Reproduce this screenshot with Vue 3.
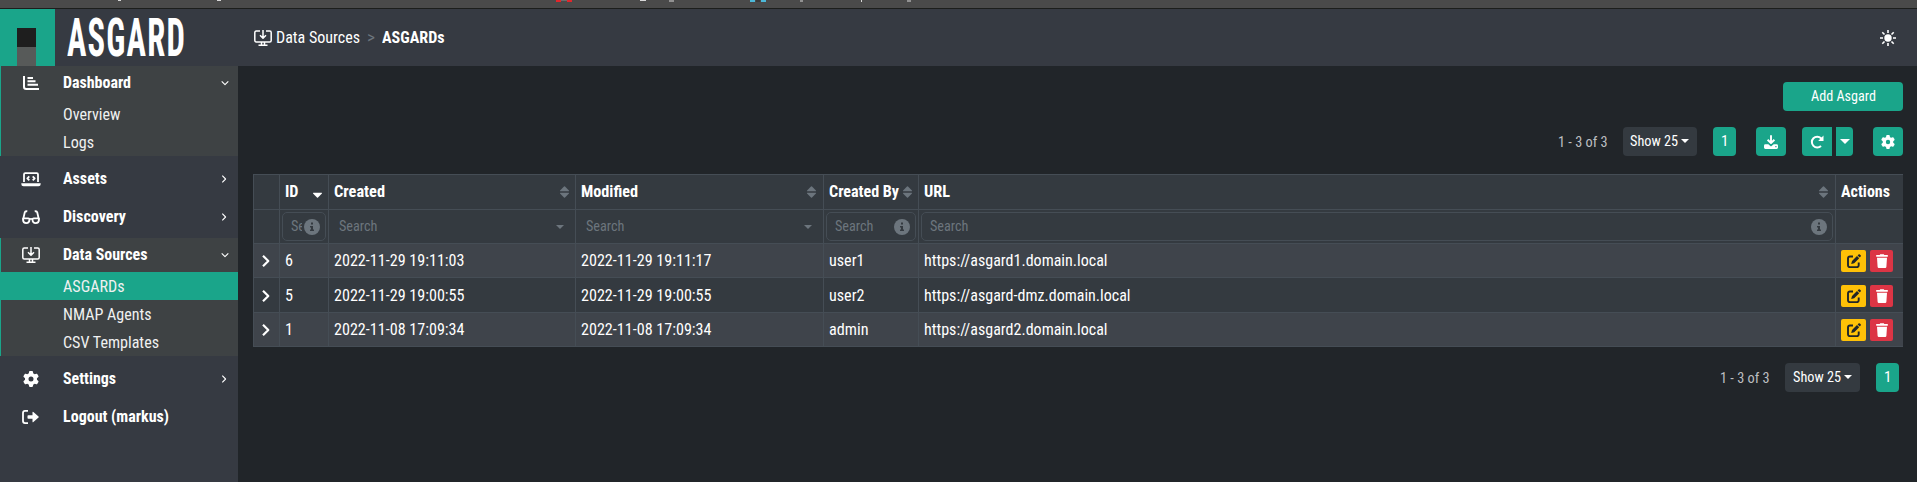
<script setup>
import { h } from 'vue'

// Condenses a label horizontally to the given advance width.
const fitText = (el, { value }) => {
  el.style.transform = 'none'
  el.style.width = 'auto'
  const natural = el.getBoundingClientRect().width
  el.style.width = value + 'px'
  el.style.transform = `scaleX(${value / natural})`
}
const vFit = { mounted: fitText, updated: fitText }

const gear = 'M495.9 166.6c3.2 8.7 .5 18.4-6.4 24.6l-43.3 39.4c1.1 8.3 1.7 16.8 1.7 25.4s-.6 17.1-1.7 25.4l43.3 39.4c6.9 6.2 9.6 15.9 6.4 24.6c-4.4 11.9-9.7 23.3-15.8 34.3l-4.7 8.1c-6.6 11-14 21.4-22.1 31.2c-5.9 7.2-15.7 9.6-24.5 6.8l-55.7-17.7c-13.4 10.3-28.2 18.9-44 25.4l-12.5 57.1c-2 9.1-9 16.3-18.2 17.8c-13.8 2.3-28 3.5-42.5 3.5s-28.7-1.2-42.5-3.5c-9.2-1.5-16.2-8.7-18.2-17.8l-12.5-57.1c-15.8-6.5-30.6-15.1-44-25.4L83.1 425.9c-8.8 2.8-18.6 .3-24.5-6.8c-8.1-9.8-15.5-20.2-22.1-31.2l-4.7-8.1c-6.1-11-11.4-22.4-15.8-34.3c-3.2-8.7-.5-18.4 6.4-24.6l43.3-39.4C64.6 273.1 64 264.6 64 256s.6-17.1 1.7-25.4L22.4 191.2c-6.9-6.2-9.6-15.9-6.4-24.6c4.4-11.9 9.7-23.3 15.8-34.3l4.7-8.1c6.6-11 14-21.4 22.1-31.2c5.9-7.2 15.7-9.6 24.5-6.8l55.7 17.7c13.4-10.3 28.2-18.9 44-25.4l12.5-57.1c2-9.1 9-16.3 18.2-17.8C227.3 1.2 241.5 0 256 0s28.7 1.2 42.5 3.5c9.2 1.5 16.2 8.7 18.2 17.8l12.5 57.1c15.8 6.5 30.6 15.1 44 25.4l55.7-17.7c8.8-2.8 18.6-.3 24.5 6.8c8.1 9.8 15.5 20.2 22.1 31.2l4.7 8.1c6.1 11 11.4 22.4 15.8 34.3zM256 336a80 80 0 1 0 0-160 80 80 0 1 0 0 160z'

// Each icon: viewBox size, filled paths and stroked paths.
const icons = {
  chart: { w: 16, h: 14, line: 'M1 0v10.800q0 2.200 2.200 2.200h12.800M4.500 2h5.500M4.500 5.200h8M4.500 8.800h10.500', sw: 2 },
  laptop: { w: 20, h: 15, line: 'M3 10V2.400Q3 1.200 4.200 1.200h11.600q1.200 0 1.200 1.200V10M8.300 4.400 6.300 6.400l2 2M11.700 4.400l2 2-2 2', fill: 'M.3 11.300h19.400v.7q0 2.200-2.200 2.200h-15Q.3 14.200.3 12z', sw: 1.8 },
  glasses: { w: 18, h: 14, line: 'M1 10 2.800 2.300Q3.300.8 5.300 1.400M17 10 15.200 2.300Q14.700.8 12.700 1.400M1 8.300h5.300q1.200 0 1.200 1.300 0 3.500-3.200 3.500T1 9.800zM17 8.300h-5.300q-1.200 0-1.200 1.300 0 3.500 3.200 3.500T17 9.800zM7.300 9.300q1.700-.9 3.400 0', sw: 1.8 },
  source: { w: 18, h: 16, line: 'M6 .9H2.300Q.8.900.8 2.400v8q0 1.500 1.500 1.500h13.400q1.500 0 1.500-1.500v-8Q17.200.9 15.700.9H12M9 0v7.500M6 5.300l3 3 3-3M4.500 15.200h9M7.500 12v3M10.500 12v3', sw: 1.5 },
  gear: { w: 512, h: 512, fill: gear },
  logout: { w: 17, h: 14, line: 'M6 .9H3Q1 .9 1 2.900v8.200q0 2 2 2h3', fill: 'M6.300 5.200h4.200V2.300q0-1 .9-.4l5.100 4.600q.6.500 0 1l-5.100 4.600q-.9.600-.9-.4V8.800H6.300q-.8 0-.8-.8V6q0-.8.800-.8z', sw: 1.8 },
  down: { w: 10, h: 10, line: 'M1.700 3.400 5 6.600l3.300-3.200', sw: 1.1 },
  right: { w: 10, h: 10, line: 'M3.300 1.700 6.600 5 3.300 8.300', sw: 1.1 },
  expand: { w: 8, h: 12, line: 'M1 .8 6.300 6 1 11.200', sw: 2.200 },
  download: { w: 14, h: 14, line: 'M7 .3v7M3.600 4.700 7 8l3.400-3.300', fill: 'M1.400 9.300h2.900L7 11.500l2.700-2.200h2.900q1.400 0 1.400 1.400v1.900q0 1.400-1.400 1.400H1.400Q0 14 0 12.600v-1.900Q0 9.300 1.400 9.300zM11.300 11.100v1.200h1.200v-1.200z', sw: 1.9 },
  refresh: { w: 14, h: 14, line: 'M11 11A5.400 5.400 0 1 1 11 3.200L12.300 4.800', fill: 'M13.500.6V6H8.200z', sw: 2 },
  edit: { w: 14, h: 14, line: 'M6 2.500H3Q1 2.500 1 4.500v6.700q0 2 2 2h6.700q2 0 2-2V8.500', fill: 'M4.200 9.900 5 7 10 2l2.200 2.200-5 5zM10.600 1.400 11.500.5q.7-.7 1.400 0l.7.7q.7.7 0 1.400l-.8.9z', sw: 1.9 },
  trash: { w: 12, h: 14, fill: 'M.2 1h3.500L4.200.2h3.600L8.300 1h3.500v1.700H.2zM1 3.700h10l-.6 9q-.1 1.300-1.200 1.300H2.800q-1.100 0-1.200-1.300z' },
  sun: { w: 16, h: 16, fill: 'M8 4.300a3.700 3.700 0 1 0 0 7.400 3.700 3.700 0 1 0 0-7.400z', line: 'M8 0v3M8 13v3M0 8h3M13 8h3M2.300 2.300 4.500 4.500M11.500 11.500l2.200 2.200M2.300 13.700l2.200-2.200M11.500 4.500l2.200-2.200', sw: 1.6 }
}
const Icon = (p) => {
  const i = icons[p.name]
  return h('svg', { viewBox: `0 0 ${i.w} ${i.h}`, width: p.w || i.w, height: p.h || i.h }, [
    i.fill && h('path', { d: i.fill, fill: 'currentColor', 'fill-rule': 'evenodd' }),
    i.line && h('path', { d: i.line, fill: 'none', stroke: 'currentColor', 'stroke-width': i.sw, 'stroke-linejoin': 'round' })
  ])
}
Icon.props = ['name', 'w', 'h']

const menu = [
  { label: 'Dashboard', fw: 68, icon: 'chart', open: true, items: [['Overview', 57.500], ['Logs', 31]] },
  { label: 'Assets', fw: 44, icon: 'laptop', arrow: true },
  { label: 'Discovery', fw: 63, icon: 'glasses', arrow: true },
  { label: 'Data Sources', fw: 84.500, icon: 'source', open: true, items: [['ASGARDs', 61.500, true], ['NMAP Agents', 88.500], ['CSV Templates', 96]] },
  { label: 'Settings', fw: 53, icon: 'gear', arrow: true },
  { label: 'Logout (markus)', fw: 106, icon: 'logout' }
]
const columns = [
  { label: 'ID', fw: 13.5, sort: 'desc', search: 'input' },
  { label: 'Created', fw: 51, sort: 'both', search: 'select' },
  { label: 'Modified', fw: 57, sort: 'both', search: 'select' },
  { label: 'Created By', fw: 70, sort: 'both', search: 'input' },
  { label: 'URL', fw: 26, sort: 'both', search: 'input' },
  { label: 'Actions', fw: 49 }
]
const rows = [
  [['6', 8], ['2022-11-29 19:11:03', 130.500], ['2022-11-29 19:11:17', 130.500], ['user1', 35.500], ['https://asgard1.domain.local', 183.500]],
  [['5', 8], ['2022-11-29 19:00:55', 130.500], ['2022-11-29 19:00:55', 130.500], ['user2', 35.500], ['https://asgard-dmz.domain.local', 206.500]],
  [['1', 8], ['2022-11-08 17:09:34', 130.500], ['2022-11-08 17:09:34', 130.500], ['admin', 39.500], ['https://asgard2.domain.local', 183.500]]
]
</script>

<template>
  <div class="page">
    <div class="strip">
      <svg width="960" height="8" viewBox="0 0 960 8">
        <path d="M556 0h5v2h-5zM567 0h5v2h-5z" fill="#e2262b" />
        <path d="M561 0h6v1h-6z" fill="#6a6a6a" />
        <path d="M750 0h5v2h-5zM761 0h5v2h-5z" fill="#4db8d8" />
        <path d="M756 0h4v2h-4z" fill="#3a3a3a" />
        <path d="M118 .5h3M217 .5h4M640 .5h6M669 1h5M800 1h3M861.500 0v2M907 1h4" stroke="#d8d8d8" fill="none" />
      </svg>
    </div>
    <header class="top">
      <div class="brand">
        <div class="mark"><i class="dark"></i><i class="grey"></i></div>
        <span class="name t" v-fit="119">ASGARD</span>
      </div>
      <nav class="crumbs">
        <Icon name="source" />
        <span class="t c1" v-fit="84">Data Sources</span>
        <span class="t sep" v-fit="8">&gt;</span>
        <span class="t b" v-fit="62.500">ASGARDs</span>
      </nav>
      <Icon name="sun" class="sun" />
    </header>

    <div class="body">
      <aside class="side">
        <div v-for="m in menu" :key="m.label" class="group" :class="{ open: m.open }">
          <div class="head">
            <span class="ico"><Icon :name="m.icon" :w="m.icon === 'gear' ? 16 : null" :h="m.icon === 'gear' ? 16 : null" /></span>
            <span class="t b" v-fit="m.fw">{{ m.label }}</span>
            <Icon v-if="m.open" name="down" class="arr" />
            <Icon v-else-if="m.arrow" name="right" class="arr" />
          </div>
          <div v-for="s in m.items" :key="s[0]" class="sub" :class="{ on: s[2] }">
            <span class="t" v-fit="s[1]">{{ s[0] }}</span>
          </div>
        </div>
      </aside>

      <main class="main">
        <div class="actions"><button class="btn add"><span class="t" v-fit="65">Add Asgard</span></button></div>
        <div class="tools">
          <span class="t count" v-fit="49.500">1 - 3 of 3</span>
          <button class="btn show"><span class="t" v-fit="48">Show 25</span><i class="caret"></i></button>
          <button class="btn page-no"><span class="t" v-fit="7.500">1</span></button>
          <button class="btn sq dl"><Icon name="download" /></button>
          <button class="btn sq rl"><Icon name="refresh" /></button>
          <button class="btn split"><i class="caret big"></i></button>
          <button class="btn sq cog"><Icon name="gear" w="14" h="14" /></button>
        </div>

        <section class="grid">
          <div class="row hd">
            <div class="cell"></div>
            <div v-for="c in columns" :key="c.label" class="cell">
              <span class="t b" v-fit="c.fw">{{ c.label }}</span>
              <svg v-if="c.sort" class="sort" :class="c.sort" width="9" height="12" viewBox="0 0 9 12">
                <path v-if="c.sort === 'both'" d="M.3 5.200Q-.3 5 .3 4.300L4 .4q.5-.5 1 0l3.700 3.900q.6.700 0 .9z" />
                <path d="M.3 6.800h8.400q.6.200 0 .9L5 11.600q-.5.500-1 0L.3 7.700Q-.3 7 .3 6.800z" />
              </svg>
            </div>
          </div>
          <div class="row filter">
            <div class="cell"></div>
            <div v-for="c in columns" :key="c.label" class="cell">
              <div v-if="c.search" class="field" :class="c.search">
                <span class="clip"><span class="t" v-fit="38.500">Search</span></span>
                <svg v-if="c.search === 'input'" width="16" height="16" viewBox="0 0 16 16">
                  <circle cx="8" cy="8" r="8" fill="#6c757d" />
                  <path d="M7 3.600h2v2H7zM6 7h3v3.600h1v1.500H6v-1.500h1V8.400H6z" fill="#343a40" />
                </svg>
                <i v-else class="caret"></i>
              </div>
            </div>
          </div>
          <div v-for="(r, n) in rows" :key="n" class="row data">
            <div class="cell exp"><Icon name="expand" /></div>
            <div v-for="(c, k) in r" :key="k" class="cell"><span class="t" v-fit="c[1]">{{ c[0] }}</span></div>
            <div class="cell acts">
              <button class="mini edit"><Icon name="edit" /></button>
              <button class="mini del"><Icon name="trash" /></button>
            </div>
          </div>
        </section>

        <div class="tools foot">
          <span class="t count" v-fit="49.500">1 - 3 of 3</span>
          <button class="btn show"><span class="t" v-fit="48">Show 25</span><i class="caret"></i></button>
          <button class="btn page-no"><span class="t" v-fit="7.500">1</span></button>
        </div>
      </main>
    </div>
  </div>
</template>

<style>
body { margin: 0; background: #212529; overflow: hidden; }
</style>

<style scoped>
.page { width: 1917px; height: 482px; display: flex; flex-direction: column; overflow: hidden; background: #212529; color: #fff; font: 16px/24px "Roboto Condensed", Roboto, sans-serif; font-stretch: 75%; }
.page *, .page *::before { box-sizing: border-box; }
svg { display: block; flex: none; }
.t { display: inline-block; white-space: nowrap; transform-origin: 0 50%; flex: none; }
.b { font-weight: 700; }
.strip { height: 9px; flex: none; background: #4a4a4a; border-bottom: 1px solid #1c1e1c; }
.top { height: 57px; flex: none; display: flex; align-items: center; background: #363a42; }
.brand { width: 238px; height: 57px; display: flex; align-items: center; }
.mark { width: 55px; height: 57px; background: #1aa58a; padding: 19px 0 0 17px; margin-right: 12px; }
.mark i { display: block; width: 19px; height: 19px; }
.dark { background: #1e1e1e; }
.grey { background: #575a59; }
.name { font-size: 54px; line-height: 57px; font-weight: 700; letter-spacing: 2px; }
.crumbs { display: flex; align-items: center; padding-left: 16px; }
.c1 { margin-left: 4px; }
.sep { margin: 0 7px; color: #6c757d; }
.sun { margin: 0 21px 0 auto; }
.body { display: flex; flex: 1; min-height: 0; }
.side { width: 238px; flex: none; background: #363a42; }
.group { padding: 3px 0 1px 1px; }
.group.open { padding: 0; margin-bottom: 3px; background: #3e4244; border-left: 1px solid #1aa58a; }
.group:not(.open) + .group.open { margin-top: 3px; }
.head { height: 34px; display: flex; align-items: center; padding: 0 9px 0 0; }
.open .head { padding-right: 8px; }
.ico { width: 59px; margin-right: 3px; display: flex; justify-content: center; }
.arr { margin-left: auto; }
.sub { height: 28px; display: flex; align-items: center; padding: 2px 0 0 62px; color: #f0f1f1; }
.sub.on { background: #1aa58a; }
.main { flex: 1; padding: 16px 14px 0 15px; }
.actions { display: flex; justify-content: flex-end; }
.btn { height: 29px; border: 0; border-radius: 4px; padding: 0; background: #1aa58a; color: #fff; display: flex; align-items: center; justify-content: center; font: 15px/22px "Roboto Condensed", Roboto, sans-serif; font-stretch: 75%; }
.btn .t { margin-bottom: 2px; }
.add { width: 120px; }
.tools { height: 29px; margin-top: 16px; display: flex; align-items: center; justify-content: flex-end; }
.count { font-size: 15px; color: #bdbfc1; margin-right: 16px; }
.show { width: 74px; gap: 3px; background: #343a40; margin-right: 16px; }
.show .caret { margin-bottom: 2px; }
.caret { width: 0; height: 0; border: 4px solid transparent; border-top-color: currentColor; border-bottom: 0; }
.show .t { margin-left: -1px; }
.caret.big { border-width: 5px 5px 0; }
.page-no { width: 23px; }
.sq { width: 30px; }
.dl { margin-left: 20px; }
.rl { margin-left: 16px; border-radius: 4px 0 0 4px; }
.split { width: 17px; margin-left: 4px; border-radius: 0 4px 4px 0; }
.cog { margin-left: 20px; }
.grid { margin-top: 18px; border-bottom: 1px solid #454d55; }
.row { display: grid; grid-template-columns: 26px 49px 247px 248px 95px 917px 68px; height: 34px; background: #343a40; }
.hd, .data:nth-child(4) { height: 35px; }
.data:nth-child(4) .cell { padding-top: 1px; }
.data:nth-child(odd) { background: #3f444b; }
.cell { border: 1px solid #454d55; border-width: 1px 0 0 1px; display: flex; align-items: center; padding: 0 6px 0 5px; min-width: 0; }
.cell > .t { margin-left: -.5px; }
.filter .cell { padding: 0 2px; }
.sort { margin-left: auto; fill: #6c757d; }
.hd .cell:nth-child(4) .sort, .hd .cell:nth-child(6) .sort { margin-right: 1px; }
.sort.desc { fill: #fff; }
.field { flex: 1; min-width: 0; height: 29px; border: 1px solid #454d55; border-radius: 5px; display: flex; align-items: center; justify-content: space-between; padding: 0 5px 0 8px; font-size: 15px; color: #6c757d; }
.field.select { border-color: transparent; padding: 0 7px; }
.field.select .caret { margin-right: 1px; }
.clip { overflow: hidden; display: flex; flex: 0 1 auto; margin: 0 2px 2px 0; }
.exp { padding-left: 8px; }
.acts { gap: 4px; }
.mini { height: 22px; border: 0; border-radius: 2px; padding: 0; display: flex; align-items: center; justify-content: center; }
.edit { width: 25px; background: #ffc107; color: #212529; }
.del { width: 23px; background: #dc3545; color: #fff; }
.foot { margin-top: 16px; padding-right: 4px; }
.foot .show { width: 75px; }
</style>
